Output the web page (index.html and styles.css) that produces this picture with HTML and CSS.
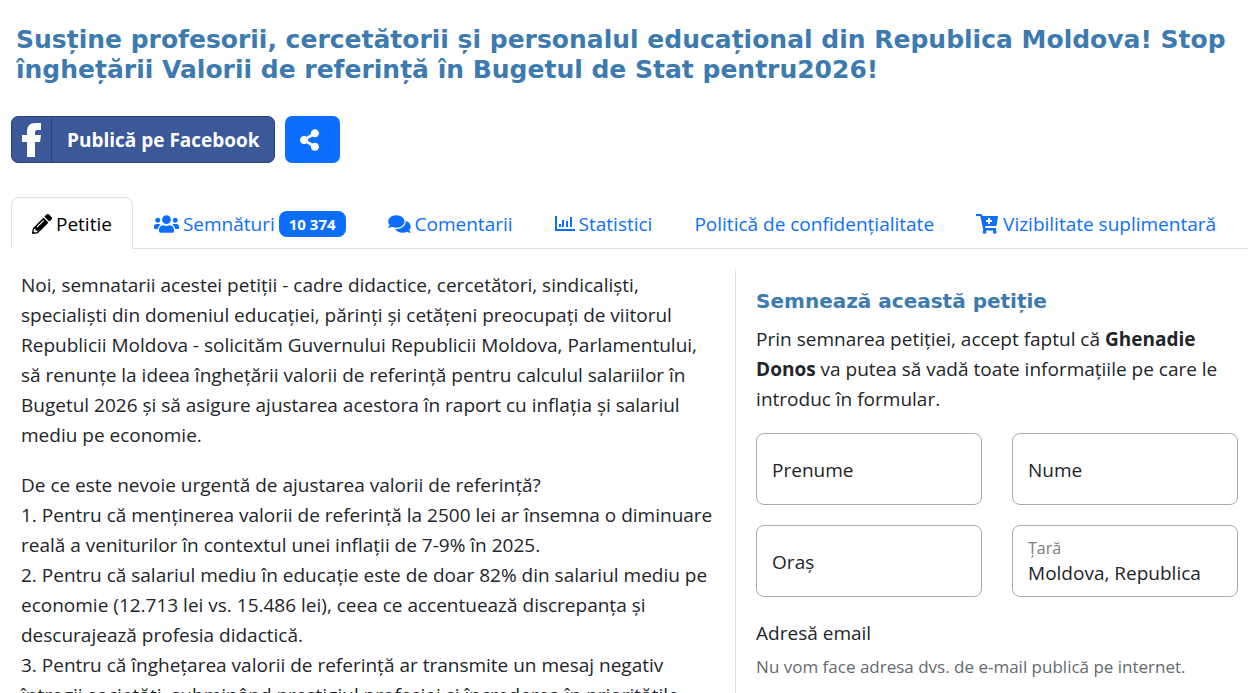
FILE: index.html
```html
<!DOCTYPE html>
<html lang="ro">
<head>
    <meta charset="UTF-8">
    <meta name="viewport" content="width=device-width, initial-scale=1.0">
    <title>Petiție</title>
    <link rel="stylesheet" href="styles.css">
</head>
<body>
    <div class="container">
        <h1>Susține profesorii, cercetătorii și personalul educațional din Republica Moldova! Stop înghețării Valorii de referință în Bugetul de Stat pentru2026!</h1>

        <div class="share-buttons">
            <button type="button" class="btn-facebook">
                <span class="fb-logo">
                    <svg width="20" height="34" viewBox="0 0 20 34"><path fill="#fff" d="M5 34V19H0v-7h5V9C5 3 8 0 13 0h6v7h-3.500C13.500 7 13 8 13 9.500V12h6l-1 7h-5v15z"/></svg>
                </span>
                <span class="fb-text">Publică pe Facebook</span>
            </button>
            <button type="button" class="btn-share" aria-label="Distribuie">
                <svg class="icon" width="19" height="22" viewBox="0 0 448 512"><path d="M352 320c-22.608 0-43.387 7.819-59.79 20.895l-102.486-64.054a96.551 96.551 0 0 0 0-41.683l102.486-64.054C308.613 184.181 329.392 192 352 192c53.019 0 96-42.981 96-96S405.019 0 352 0s-96 42.981-96 96c0 7.158.79 14.13 2.276 20.841L155.79 180.895C139.387 167.819 118.608 160 96 160c-53.019 0-96 42.981-96 96s42.981 96 96 96c22.608 0 43.387-7.819 59.79-20.895l102.486 64.054A96.301 96.301 0 0 0 256 416c0 53.019 42.981 96 96 96s96-42.981 96-96-42.981-96-96-96z"/></svg>
            </button>
        </div>

        <nav class="tabs">
            <a href="#" class="tab active">
                <svg class="icon" width="20" height="20" viewBox="0 0 512 512"><path d="M497.9 142.1l-46.1 46.1c-4.7 4.7-12.3 4.7-17 0l-111-111c-4.7-4.7-4.7-12.3 0-17l46.1-46.1c18.7-18.7 49.1-18.7 67.9 0l60.1 60.1c18.8 18.7 18.8 49.1 0 67.9zM284.2 99.8L21.6 362.4.4 483.9c-2.9 16.4 11.4 30.6 27.8 27.8l121.5-21.3 262.6-262.6c4.7-4.7 4.7-12.3 0-17l-111-111c-4.8-4.7-12.4-4.7-17.1 0zM124.1 339.9c-5.500-5.500-5.500-14.300 0-19.800l154-154c5.500-5.500 14.300-5.500 19.800 0s5.500 14.300 0 19.800l-154 154c-5.500 5.500-14.300 5.500-19.800 0zM88 424h48v36.300l-64.500 11.300-31.100-31.100L51.700 376H88v48z"/></svg>
                <span>Petitie</span>
            </a>
            <a href="#" class="tab">
                <svg class="icon" width="25" height="20" viewBox="0 0 640 512"><path d="M96 224c35.3 0 64-28.7 64-64s-28.7-64-64-64-64 28.7-64 64 28.7 64 64 64zm448 0c35.3 0 64-28.7 64-64s-28.7-64-64-64-64 28.7-64 64 28.7 64 64 64zm32 32h-64c-17.6 0-33.5 7.1-45.1 18.6 40.3 22.1 68.9 62 75.1 109.4h66c17.7 0 32-14.3 32-32v-32c0-35.3-28.7-64-64-64zm-256 0c61.9 0 112-50.1 112-112S381.9 32 320 32 208 82.1 208 144s50.1 112 112 112zm76.8 32h-8.3c-20.8 10-43.9 16-68.5 16s-47.6-6-68.5-16h-8.3C179.6 288 128 339.6 128 403.2V432c0 26.5 21.5 48 48 48h288c26.5 0 48-21.5 48-48v-28.8c0-63.6-51.6-115.2-115.2-115.2zm-223.7-13.4C161.5 263.1 145.6 256 128 256H64c-35.3 0-64 28.7-64 64v32c0 17.7 14.3 32 32 32h65.9c6.3-47.4 34.9-87.3 75.2-109.4z"/></svg>
                <span>Semnături</span>
                <span class="badge">10 374</span>
            </a>
            <a href="#" class="tab">
                <svg class="icon" width="23" height="20" viewBox="0 0 576 512"><path d="M416 192c0-88.4-93.1-160-208-160S0 103.6 0 192c0 34.3 14.1 65.9 38 92-13.4 30.2-35.5 54.2-35.8 54.5-2.2 2.3-2.8 5.7-1.5 8.7S4.8 352 8 352c36.6 0 66.9-12.3 88.7-25 32.2 15.7 70.3 25 111.3 25 114.9 0 208-71.6 208-160zm122 220c23.9-26 38-57.7 38-92 0-66.9-53.5-124.2-129.3-148.1.9 6.6 1.3 13.3 1.3 20.1 0 105.9-107.7 192-240 192-10.8 0-21.3-.8-31.7-1.9C207.8 439.6 281.8 480 368 480c41 0 79.1-9.2 111.3-25 21.8 12.7 52.1 25 88.7 25 3.2 0 6.1-1.9 7.3-4.8 1.3-2.9.7-6.3-1.5-8.7-.3-.2-22.4-24.2-35.8-54.5z"/></svg>
                <span>Comentarii</span>
            </a>
            <a href="#" class="tab">
                <svg class="icon" width="20" height="20" viewBox="0 0 20 20"><path d="M0 2h2v13h18v2H0zM4 10h2v3H4zM7 6h2v7H7zM11 7h2v6h-2zM15 3h2v10h-2z"/></svg>
                <span>Statistici</span>
            </a>
            <a href="#" class="tab"><span>Politică de confidențialitate</span></a>
            <a href="#" class="tab">
                <svg class="icon" width="23" height="20" viewBox="0 0 23 20"><path fill-rule="evenodd" d="M0 0h5.500l1 2H22l-1.500 10H9l.4 2H20v2l.5 1.500a1.800 1.800 0 1 1-3.500 0l.3-1H10l.3 1a1.800 1.800 0 1 1-3.500 0l.5-1.500L4.300 2H0zM12 4v2h-2v2h2v2h2V8h2V6h-2V4z"/></svg>
                <span>Vizibilitate suplimentară</span>
            </a>
        </nav>

        <div class="row">
            <div class="petition-text">
                <p>Noi, semnatarii acestei petiții - cadre didactice, cercetători, sindicaliști, specialiști din domeniul educației, părinți și cetățeni preocupați de viitorul Republicii Moldova - solicităm Guvernului Republicii Moldova, Parlamentului, să renunțe la ideea înghețării valorii de referință pentru calculul salariilor în Bugetul 2026 și să asigure ajustarea acestora în raport cu inflația și salariul mediu pe economie.</p>
                <p>De ce este nevoie urgentă de ajustarea valorii de referință?<br>
                1. Pentru că menținerea valorii de referință la 2500 lei ar însemna o diminuare reală a veniturilor în contextul unei inflații de 7-9% în 2025.<br>
                2. Pentru că salariul mediu în educație este de doar 82% din salariul mediu pe economie (12.713 lei vs. 15.486 lei), ceea ce accentuează discrepanța și descurajează profesia didactică.<br>
                3. Pentru că înghețarea valorii de referință ar transmite un mesaj negativ întregii societăți, subminând prestigiul profesiei și încrederea în prioritățile</p>
            </div>

            <form class="sign-form">
                <h2>Semnează această petiție</h2>
                <p>Prin semnarea petiției, accept faptul că <strong>Ghenadie Donos</strong> va putea să vadă toate informațiile pe care le introduc în formular.</p>
                <div class="fields">
                    <div class="field">
                        <input type="text" id="prenume">
                        <label for="prenume">Prenume</label>
                    </div>
                    <div class="field">
                        <input type="text" id="nume">
                        <label for="nume">Nume</label>
                    </div>
                    <div class="field">
                        <input type="text" id="oras">
                        <label for="oras">Oraș</label>
                    </div>
                    <div class="field">
                        <select id="tara">
                            <option>Moldova, Republica</option>
                        </select>
                        <label for="tara" class="label-small">Țară</label>
                    </div>
                </div>
                <label for="email" class="email-label">Adresă email</label>
                <div class="help">Nu vom face adresa dvs. de e-mail publică pe internet.</div>
                <input type="email" id="email" class="email">
            </form>
        </div>
    </div>
</body>
</html>
```
FILE: styles.css
```css
* {
    box-sizing: border-box;
}

body {
    margin: 0;
    height: 100vh;
    overflow: hidden;
    background: #fff;
    color: #212529;
    font-family: 'Segoe UI', 'Open Sans', sans-serif;
    font-size: 19px;
    line-height: 30px;
}

.container {
    padding: 25px 4px 0 11px;
}

h1, h2 {
    margin: 0;
    color: #3d7ab0;
    font-family: Verdana, 'DejaVu Sans', sans-serif;
    font-weight: bold;
}

h1 {
    padding: 0 5px;
    font-size: 25px;
    line-height: 30px;
}

h2 {
    margin: 20px 0 11px;
    font-size: 20px;
    line-height: 24px;
}

p {
    margin: 0 0 19px;
}

.petition-text p {
    margin-bottom: 20px;
}

button, input, select {
    font: inherit;
    color: inherit;
}

.icon {
    flex: none;
    fill: currentColor;
}

/* share buttons */
.share-buttons {
    display: flex;
    gap: 10px;
    margin: 31px 0 34px;
}

.share-buttons button {
    height: 47px;
    padding: 0;
    border-radius: 7px;
    color: #fff;
    cursor: pointer;
}

.btn-facebook {
    display: flex;
    align-items: stretch;
    background: #3b5998;
    border: 1px solid #2d4373;
    font-weight: bold;
}

.fb-logo {
    display: flex;
    align-items: center;
    justify-content: center;
    width: 40px;
    border-right: 1px solid #2d4373;
}

.fb-text {
    padding: 0 14px 0 15px;
    line-height: 46px;
}

.btn-share {
    display: flex;
    align-items: center;
    justify-content: center;
    width: 55px;
    background: #0d6efd;
    border: none;
}

.share-buttons .btn-share {
    padding-right: 6px;
}

/* tabs */
.tabs {
    display: flex;
    border-bottom: 1px solid #dee2e6;
}

.tab {
    display: flex;
    align-items: center;
    gap: 4px;
    margin-bottom: -1px;
    padding: 11px 20px 9px;
    border: 1px solid transparent;
    border-radius: 8px 8px 0 0;
    color: #0d6efd;
    text-decoration: none;
    white-space: nowrap;
}

.tab.active {
    background: #fff;
    border-color: #dee2e6 #dee2e6 #fff;
    color: #000;
}

.badge {
    padding: 0 10px;
    border-radius: 8px;
    background: #0d6efd;
    color: #fff;
    font-size: 15px;
    font-weight: bold;
    line-height: 26px;
}

/* content */
.row {
    display: grid;
    grid-template-columns: 24fr 17fr;
    padding-top: 20px;
}

.petition-text {
    padding: 1px 20px 0 10px;
}

.sign-form {
    padding: 0 10px 0 20px;
    border-left: 1px solid #dee2e6;
}

.fields {
    display: grid;
    grid-template-columns: 1fr 1fr;
    gap: 20px 30px;
    margin-bottom: 21px;
}

.field {
    position: relative;
    display: flex;
}

.field input,
.field select {
    width: 100%;
    height: 72px;
    padding: 24px 15px 0;
    border: 1px solid #aaa;
    border-radius: 8px;
    background: #fff;
    appearance: none;
}

.field label {
    position: absolute;
    top: 22px;
    left: 16px;
    pointer-events: none;
}

.field .label-small {
    top: 10px;
    color: #7a7c7f;
    font-size: 16px;
    line-height: 26px;
}

.email-label {
    display: block;
}

.help {
    margin: 4px 0 20px;
    color: #65696d;
    font-size: 17px;
}

.email {
    width: 100%;
    height: 72px;
    border: 1px solid #aaa;
    border-radius: 8px;
}
```
